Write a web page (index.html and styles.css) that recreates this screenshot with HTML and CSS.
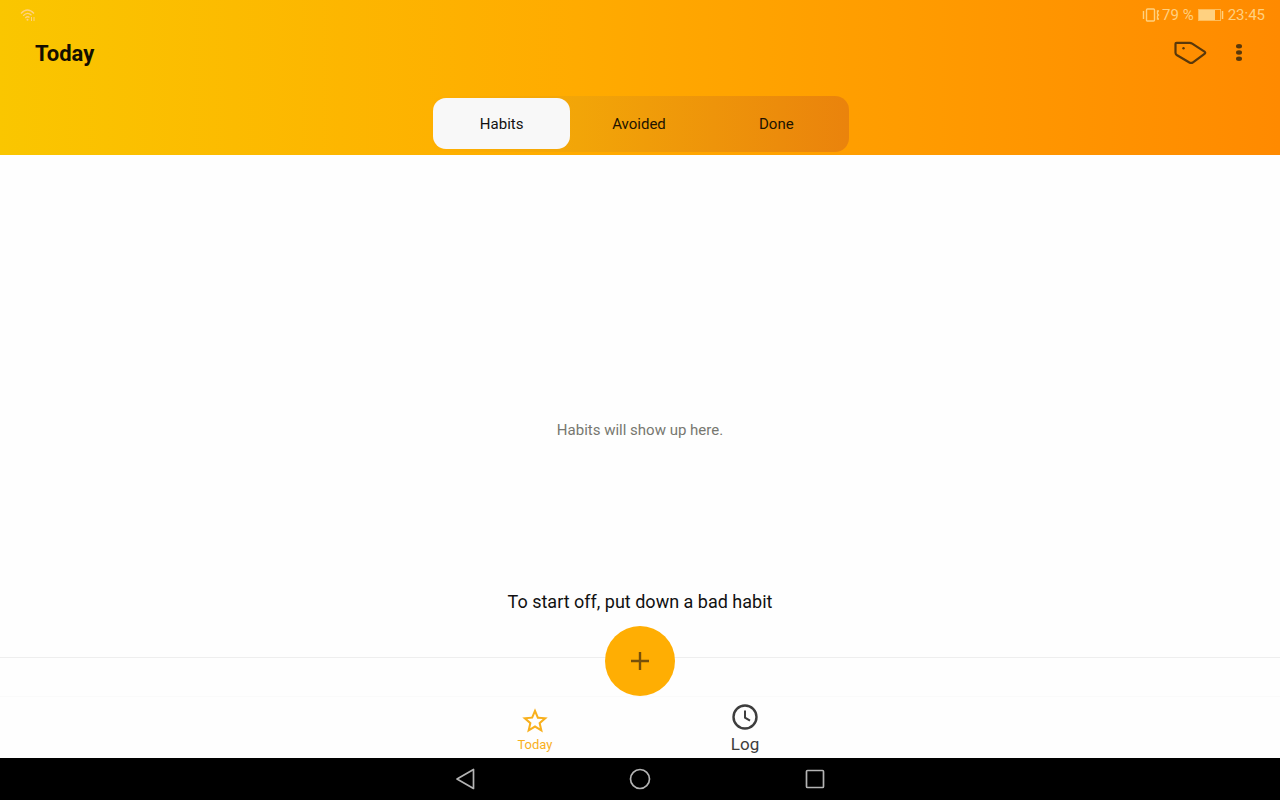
FILE: index.html
```html
<!DOCTYPE html>
<html lang="en">
<head>
<meta charset="utf-8">
<meta name="viewport" content="width=device-width, initial-scale=1">
<title>Today</title>
<link rel="stylesheet" href="styles.css">
</head>
<body>
<header class="header">
  <div class="status">
    <svg class="wifi" width="16" height="14" viewBox="0 0 16 14" fill="none" stroke="currentColor" stroke-width="1.3"><path d="M1 5.500Q7.500-1.500 14 5.500M3.200 7.800Q7.500 3.300 11.500 7.200M5.300 10Q7.500 7.800 9.500 9.500"/><circle cx="7.500" cy="11.800" r="1" fill="currentColor" stroke="none"/><path d="M11.500 9v4M14 9v4" stroke-width="1"/></svg>
    <div class="status-info">
      <svg width="18" height="14" viewBox="0 0 18 14" fill="none" stroke="currentColor" stroke-width="1.400"><rect x="4.500" y="1" width="8" height="12" rx="1"/><path d="M1.500 3v8M17 3h-1.500v3l1 1-1 1v3H17"/></svg>
      <span>79 %</span>
      <svg class="battery" width="26" height="12" viewBox="0 0 26 12" fill="none" stroke="currentColor"><rect x=".5" y=".5" width="22" height="11" stroke-opacity=".7"/><path d="M1 1h16v10H1z" fill="currentColor" stroke="none"/><path d="M24.500 2v8" stroke-width="1.500"/></svg>
      <time>23:45</time>
    </div>
  </div>
  <div class="appbar">
    <h1 class="title">Today</h1>
    <div class="actions">
      <button class="icon-button" aria-label="Tags"><svg width="34" height="24" viewBox="0 0 34 24" fill="none" stroke="currentColor" stroke-width="2.200" stroke-linejoin="round"><path d="M3.500 1.800H16.500q1.500 0 2.700.8l12.300 8q1.500 1.100 0 2.200l-11.500 8.500q-1.700 1.200-3.600.2L3.700 14q-1.200-.8-1.200-2.200V2.800q0-1 1-1z"/><circle cx="10.500" cy="7.300" r="1.200" fill="currentColor" stroke="none"/></svg></button>
      <button class="icon-button" aria-label="More options"><svg width="8" height="20" viewBox="0 0 8 20" fill="currentColor"><ellipse cx="4" cy="3.200" rx="3" ry="2.200"/><ellipse cx="4" cy="9.500" rx="3" ry="2.200"/><ellipse cx="4" cy="15.800" rx="3" ry="2.200"/></svg></button>
    </div>
  </div>
  <div class="tabs" role="tablist">
    <button class="tab tab-active" role="tab" aria-selected="true">Habits</button>
    <button class="tab" role="tab" aria-selected="false">Avoided</button>
    <button class="tab" role="tab" aria-selected="false">Done</button>
  </div>
</header>
<main class="content">
  <p class="empty">Habits will show up here.</p>
  <p class="hint">To start off, put down a bad habit</p>
</main>
<footer>
  <div class="add-bar">
    <button class="fab" aria-label="Add habit"><svg width="20" height="20" viewBox="0 0 20 20" fill="none" stroke="currentColor" stroke-width="2.400"><path d="M10 1v18M1 10h18"/></svg></button>
  </div>
  <nav class="bottom-nav">
    <a class="nav-item nav-active" href="#today"><svg width="28" height="28" viewBox="1 1 22 22" fill="currentColor"><path d="M22 9.240l-7.190-.620L12 2 9.190 8.630 2 9.240l5.460 4.730L5.820 21 12 17.270 18.180 21l-1.630-7.030L22 9.240zM12 15.400l-3.760 2.270 1-4.280-3.320-2.880 4.380-.380L12 6.100l1.710 4.040 4.380.380-3.320 2.880 1 4.280L12 15.400z"/></svg><span>Today</span></a>
    <a class="nav-item" href="#log"><svg width="28" height="28" viewBox="0 0 28 28" fill="none" stroke="currentColor" stroke-width="2.400"><circle cx="14" cy="14" r="11.500"/><path d="M14 7.500v7.200l5 3" stroke-width="2"/></svg><span>Log</span></a>
  </nav>
  <div class="system-nav">
    <button class="icon-button" aria-label="Back"><svg width="24" height="24" viewBox="0 0 24 24" fill="none" stroke="currentColor" stroke-width="1.700" stroke-linejoin="round"><path d="M20.500 2.500v19L4 12z"/></svg></button>
    <button class="icon-button" aria-label="Home"><svg width="24" height="24" viewBox="0 0 24 24" fill="none" stroke="currentColor" stroke-width="1.700"><circle cx="12" cy="12" r="9.500"/></svg></button>
    <button class="icon-button" aria-label="Recent apps"><svg width="24" height="24" viewBox="0 0 24 24" fill="none" stroke="currentColor" stroke-width="1.700"><rect x="3.500" y="3.500" width="17" height="17" rx="1"/></svg></button>
  </div>
</footer>
</body>
</html>
```
FILE: styles.css
```css
* { box-sizing: border-box; }
body {
  margin: 0;
  min-height: 100vh;
  display: flex;
  flex-direction: column;
  background: #fefefe;
  color: #111;
  font-family: Roboto, sans-serif;
}
h1, p { margin: 0; }
button {
  border: 0;
  padding: 0;
  background: none;
  color: inherit;
  font: inherit;
  cursor: pointer;
}
svg { display: block; }
.header {
  background: linear-gradient(90deg, #fac600, #ffab00 45%, #ff8a00);
  padding-bottom: 3px;
}
.status {
  height: 30px;
  display: flex;
  align-items: center;
  justify-content: space-between;
  padding: 0 15px 0 20px;
  color: #ffd180;
  font-size: 15px;
}
.status-info { display: flex; align-items: center; gap: 4px; }
.status-info span { margin-left: -2px; }
.appbar {
  height: 46px;
  display: flex;
  align-items: center;
  justify-content: space-between;
  padding: 0 37px 0 35px;
}
.title { font-size: 22px; line-height: 28px; padding-top: 2px; font-weight: 700; color: #130e00; }
.actions { display: flex; align-items: center; gap: 28px; color: #59380b; }
.tabs {
  width: 418px;
  max-width: 100%;
  height: 56px;
  margin: 20px auto 0;
  padding: 2px 4px 3px 2px;
  display: flex;
  border-radius: 14px;
  background: linear-gradient(90deg, #ffb000, #f2a508 35%, #ea830c);
}
.tab { flex: 1; border-radius: 13px; font-size: 15px; color: #211300; }
.tab-active { background: #f8f8f8; color: #111; }
.content {
  flex: 1;
  display: flex;
  flex-direction: column;
  text-align: center;
  padding-bottom: 43px;
}
.empty {
  flex: 1;
  display: flex;
  align-items: center;
  justify-content: center;
  padding-top: 114px;
  color: #777770;
  font-size: 15px;
}
.hint { font-size: 18px; line-height: 24px; }
.add-bar {
  height: 39px;
  display: flex;
  align-items: flex-end;
  justify-content: center;
  border-top: 1px solid #eee;
}
.fab {
  width: 70px;
  height: 70px;
  flex-shrink: 0;
  display: grid;
  place-items: center;
  border-radius: 50%;
  background: #ffae03;
  color: #76500a;
}
.bottom-nav {
  height: 62px;
  display: flex;
  justify-content: center;
  gap: 10px;
  border-top: 1px solid #fafafa;
}
.nav-item {
  width: 200px;
  display: flex;
  flex-direction: column;
  align-items: center;
  justify-content: flex-end;
  padding-bottom: 3px;
  color: #3d3d3d;
  font-size: 17px;
  line-height: 22px;
  text-decoration: none;
}
.nav-active { color: #f8b01d; font-size: 13px; line-height: 20px; }
.nav-item svg { margin-bottom: 2px; }
.nav-active svg { margin-bottom: 0; }
.system-nav {
  height: 42px;
  display: flex;
  align-items: center;
  justify-content: center;
  gap: 151px;
  background: #000;
  color: #b4b4b4;
}
```
